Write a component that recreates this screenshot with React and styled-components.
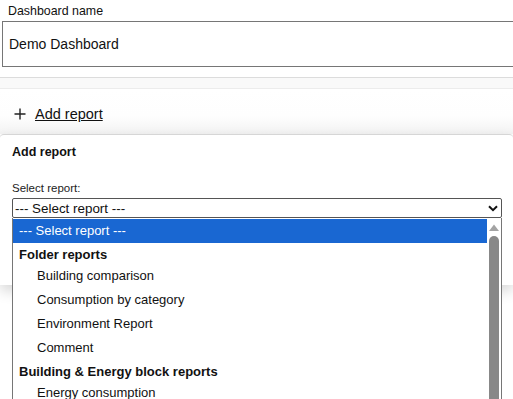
import styled, { createGlobalStyle } from "styled-components";

const GlobalStyle = createGlobalStyle`
  html, body {
    margin: 0;
    padding: 0;
    background: #fff;
    font-family: "Liberation Sans", Arial, sans-serif;
    color: #111;
  }
`;

const options = [
  { label: "--- Select report ---", selected: true },
  { label: "Folder reports", group: true },
  { label: "Building comparison" },
  { label: "Consumption by category" },
  { label: "Environment Report" },
  { label: "Comment" },
  { label: "Building & Energy block reports", group: true },
  { label: "Energy consumption" },
];

const App = () => {
  return (
    <>
      <GlobalStyle />
      <Page>
        <NameField>
          <FieldLabel>Dashboard name</FieldLabel>
          <NameInput>Demo Dashboard</NameInput>
        </NameField>
        <Divider />
        <ReportsPanel>
          <AddLink>
            <PlusIcon viewBox="0 0 12 12">
              <path d="M6 0.5v11M0.5 6h11" stroke="#222" strokeWidth="1.4" />
            </PlusIcon>
            <span>Add report</span>
          </AddLink>
        </ReportsPanel>
        <Card>
          <CardTitle>Add report</CardTitle>
          <SelectLabel>Select report:</SelectLabel>
          <SelectWrap>
            <SelectBox>
              <span>--- Select report ---</span>
              <Chevron viewBox="0 0 10 7">
                <path d="M1 1.2l4 4 4-4" stroke="#111" strokeWidth="2" fill="none" />
              </Chevron>
            </SelectBox>
            <DropList>
              <OptionColumn>
                {options.map((o) => (
                  <OptionRow key={o.label} $group={o.group} $selected={o.selected}>
                    {o.label}
                  </OptionRow>
                ))}
              </OptionColumn>
              <ScrollTrack>
                <ScrollArrow viewBox="0 0 10 7">
                  <path d="M0 7L5 0.5 10 7z" fill="#a3a3a3" />
                </ScrollArrow>
                <ScrollThumb />
              </ScrollTrack>
            </DropList>
          </SelectWrap>
        </Card>
      </Page>
    </>
  );
};

export default App;

const Page = styled.div`
  height: 100vh;
  overflow: hidden;
`;

const NameField = styled.div`
  padding: 4px 0 0 2px;
`;

const FieldLabel = styled.div`
  font-size: 12.4px;
  line-height: 14px;
  padding-left: 6px;
  margin-bottom: 3px;
`;

const NameInput = styled.div`
  height: 44px;
  border: 1px solid #767676;
  border-right: none;
  display: flex;
  align-items: center;
  padding-left: 6px;
  font-size: 14px;
`;

const Divider = styled.div`
  margin-top: 10px;
  height: 10px;
  border-top: 1px solid #dcdcdc;
  border-bottom: 1px solid #ececec;
  background: #f9f9f9;
`;

const ReportsPanel = styled.div`
  height: 45px;
  background: linear-gradient(#fff 0%, #fefefe 60%, #f3f3f3 100%);
  display: flex;
  align-items: center;
  padding-left: 14px;
`;

const AddLink = styled.div`
  display: flex;
  align-items: center;
  gap: 9px;
  font-size: 14.5px;
  margin-top: 5px;

  span {
    text-decoration: underline;
  }
`;

const PlusIcon = styled.svg`
  width: 12px;
  height: 12px;
`;

const Card = styled.div`
  position: relative;
  height: 141px;
  border-top: 1px solid #d6d6d6;
  border-radius: 4px 4px 0 0;
  box-shadow: 0 6px 14px rgba(0, 0, 0, 0.16);
  padding: 9px 12px 0 12px;
  background: #fff;
`;

const CardTitle = styled.div`
  font-size: 12.5px;
  font-weight: bold;
  line-height: 16px;
`;

const SelectLabel = styled.div`
  font-size: 11.5px;
  line-height: 14px;
  margin-top: 21px;
  color: #222;
`;

const SelectWrap = styled.div`
  position: relative;
  width: 490px;
  margin-top: 3px;
`;

const SelectBox = styled.div`
  height: 18px;
  border: 1px solid #555;
  border-radius: 2px;
  display: flex;
  align-items: center;
  justify-content: space-between;
  padding: 0 3px 0 2px;
  font-size: 13.4px;
  color: #111;
`;

const Chevron = styled.svg`
  width: 10px;
  height: 7px;
`;

const DropList = styled.div`
  position: absolute;
  top: 20px;
  left: 0;
  width: 488px;
  height: 190px;
  background: #fff;
  border-left: 1px solid #767676;
  border-right: 1px solid #767676;
  display: flex;
  z-index: 10;
`;

const OptionColumn = styled.div`
  flex: 1;
  padding-top: 1px;
`;

const OptionRow = styled.div`
  height: ${(p) => (p.$group ? "21px" : "24px")};
  line-height: ${(p) => (p.$group ? "23px" : "24px")};
  font-size: 13px;
  padding-left: ${(p) => (p.$group || p.$selected ? "6px" : "24px")};
  font-weight: ${(p) => (p.$group ? "bold" : "normal")};
  background: ${(p) => (p.$selected ? "#1967d2" : "transparent")};
  color: ${(p) => (p.$selected ? "#fff" : "#111")};
`;

const ScrollTrack = styled.div`
  width: 14px;
  display: flex;
  flex-direction: column;
  align-items: center;
  padding-top: 6px;
`;

const ScrollArrow = styled.svg`
  width: 10px;
  height: 7px;
`;

const ScrollThumb = styled.div`
  margin-top: 5px;
  width: 10px;
  flex: 1;
  background: #888;
  border-radius: 5px 5px 0 0;
`;
